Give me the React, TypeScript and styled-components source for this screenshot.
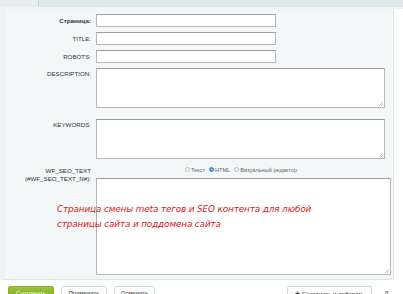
import React from "react";
import styled, { createGlobalStyle } from "styled-components";

const Global = createGlobalStyle`
  html, body { margin: 0; padding: 0; background: #ffffff; }
  body { font-family: "Liberation Sans", Arial, sans-serif; overflow: hidden; }
`;

const Page = styled.div`
  width: 403px;
  height: 294px;
  position: relative;
  overflow: hidden;
  background: #ffffff;
`;

const TopBar = styled.div`
  height: 7px;
  display: flex;
  background: #dde6e8;
  border-bottom: 2px solid #eef3f4;
`;

const TopTab = styled.div`
  width: 38px;
  background: #e8eef0;
  border-right: 1px solid #cfd9dc;
`;

const Body = styled.div`
  display: flex;
  height: 271px;
  background: #ffffff;
`;

const LeftEdge = styled.div`
  width: 5px;
  background: #ecf1f2;
`;

const Panel = styled.div`
  width: 389px;
  background: #f4f7f8;
  border-right: 1px solid #e4eaec;
  border-bottom: 1px solid #dde4e6;
  padding-top: 5px;
  box-sizing: border-box;
  position: relative;
`;

const Row = styled.div<{ $gap?: number }>`
  display: grid;
  grid-template-columns: 86px 1fr;
  column-gap: 5px;
  margin-bottom: ${(p) => p.$gap ?? 5}px;
`;

const Label = styled.div<{ $bold?: boolean; $top?: boolean }>`
  font-size: 6.2px;
  color: #333;
  text-align: right;
  font-weight: ${(p) => (p.$bold ? 700 : 400)};
  align-self: ${(p) => (p.$top ? "start" : "center")};
  padding-top: ${(p) => (p.$top ? "2px" : "0")};
  line-height: 8px;
`;

const Input = styled.div`
  width: 180px;
  height: 13px;
  box-sizing: border-box;
  background: #fff;
  border: 1px solid #b4b8ba;
  border-top-color: #9a9ea0;
`;

const Area = styled.div<{ $w: number; $h: number }>`
  width: ${(p) => p.$w}px;
  height: ${(p) => p.$h}px;
  box-sizing: border-box;
  background: #fff;
  border: 1px solid #b4b8ba;
  border-top-color: #9a9ea0;
  position: relative;
`;

const Grip = styled.svg`
  position: absolute;
  right: 1px;
  bottom: 1px;
`;

const RadioRow = styled.div`
  display: flex;
  justify-content: center;
  align-items: center;
  gap: 4px;
  width: 290px;
  height: 9px;
  margin-bottom: 4px;
`;

const RadioItem = styled.span`
  display: inline-flex;
  align-items: center;
  gap: 1px;
  font-size: 5.6px;
  color: #666;
`;

const RadioDot = styled.span<{ $on?: boolean }>`
  width: 5px;
  height: 5px;
  border-radius: 50%;
  box-sizing: border-box;
  border: ${(p) => (p.$on ? "1.5px solid #1e7fd8" : "1px solid #b9bcbe")};
  background: ${(p) => (p.$on ? "#fff" : "#fbfbfb")};
  box-shadow: ${(p) => (p.$on ? "inset 0 0 0 1px #1e7fd8" : "none")};
`;

const Note = styled.div`
  position: absolute;
  left: 52px;
  top: 193px;
  color: #d42020;
  font-family: "DejaVu Sans", sans-serif;
  font-style: italic;
  font-size: 8.8px;
  line-height: 15px;
  letter-spacing: -0.1px;
  pointer-events: none;
`;

const Footer = styled.div`
  display: flex;
  align-items: flex-start;
  padding: 6px 0 0 8px;
  gap: 7px;
  height: 20px;
  box-sizing: border-box;
`;

const Btn = styled.div<{ $w: number; $primary?: boolean }>`
  width: ${(p) => p.$w}px;
  height: 14px;
  box-sizing: border-box;
  border-radius: 2px;
  font-size: 6px;
  text-align: center;
  padding-top: 3px;
  color: ${(p) => (p.$primary ? "#f3f8e6" : "#333")};
  background: ${(p) => (p.$primary ? "linear-gradient(#9cc23b, #7fa822)" : "#fdfdfd")};
  border: 1px solid ${(p) => (p.$primary ? "#8ab12c" : "#d2d6d8")};
`;

const Spacer = styled.div`
  flex: 1;
`;

const More = styled.div`
  width: 19px;
  font-size: 6px;
  color: #555;
  padding-top: 3px;
  padding-left: 5px;
`;

const labels = [
  { t: "Страница:", bold: true },
  { t: "TITLE:" },
  { t: "ROBOTS:" },
];

const GripIcon = () => (
  <Grip width="5" height="5" viewBox="0 0 5 5">
    <path d="M1 5 L5 1 M3 5 L5 3" stroke="#999" strokeWidth="0.6" />
  </Grip>
);

export default function App() {
  return (
    <Page>
      <Global />
      <TopBar>
        <TopTab />
      </TopBar>
      <Body>
        <LeftEdge />
        <Panel>
          {labels.map((l) => (
            <Row key={l.t}>
              <Label $bold={l.bold}>{l.t}</Label>
              <Input />
            </Row>
          ))}
          <Row $gap={11}>
            <Label $top>DESCRIPTION:</Label>
            <Area $w={289} $h={40}>
              <GripIcon />
            </Area>
          </Row>
          <Row $gap={6}>
            <Label $top>KEYWORDS:</Label>
            <Area $w={289} $h={40}>
              <GripIcon />
            </Area>
          </Row>
          <Row $gap={0}>
            <Label $top>
              WF_SEO_TEXT
              <br />
              (#WF_SEO_TEXT_N#):
            </Label>
            <div>
              <RadioRow>
                <RadioItem>
                  <RadioDot /> Текст
                </RadioItem>
                <RadioItem>
                  <RadioDot $on /> HTML
                </RadioItem>
                <RadioItem>
                  <RadioDot /> Визуальный редактор
                </RadioItem>
              </RadioRow>
              <Area $w={295} $h={97}>
                <GripIcon />
              </Area>
            </div>
          </Row>
          <Note>
            Страница смены meta тегов и SEO контента для любой
            <br />
            страницы сайта и поддомена сайта
          </Note>
        </Panel>
      </Body>
      <Footer>
        <Btn $w={46} $primary>Сохранить</Btn>
        <Btn $w={46}>Применить</Btn>
        <Btn $w={41}>Отменить</Btn>
        <Spacer />
        <Btn $w={85}>✚ Сохранить и добавить</Btn>
        <More>⇵</More>
      </Footer>
    </Page>
  );
}
